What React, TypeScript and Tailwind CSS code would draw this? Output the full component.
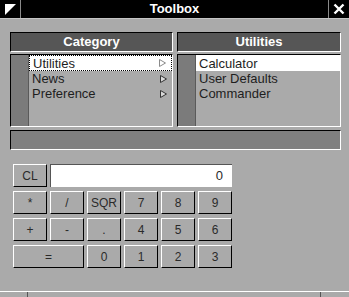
const font = { fontFamily: '"Liberation Sans", Arial, sans-serif' };

function Arrow({ selected }: { selected?: boolean }) {
  return (
    <svg width="7" height="8" viewBox="0 0 7 8" className="shrink-0">
      <path
        d="M0.5 0.5 L6.5 4 L0.5 7.5 Z"
        fill={selected ? "#ffffff" : "#d8d8d8"}
        stroke={selected ? "#8a8a8a" : "#333333"}
        strokeWidth="1"
      />
    </svg>
  );
}

function Panel({
  title,
  items,
  arrows,
  focus,
  width,
}: {
  title: string;
  items: string[];
  arrows?: boolean;
  focus?: boolean;
  width: string;
}) {
  return (
    <div className={`flex flex-col ${width}`}>
      <div className="h-[20px] bg-[#565656] border-t border-l border-black border-b border-r border-b-white border-r-white flex items-center justify-center text-white font-bold text-[13px]">
        {title}
      </div>
      <div className="mt-[2px] h-[73px] flex border-t border-l border-black border-b border-r border-b-white border-r-white">
        <div className="w-[18px] bg-[#7b7b7b] border-r border-[#5a5a5a]" />
        <div className="flex-1 flex flex-col text-[13px] text-[#1e1e1e] leading-[15px]">
          {items.map((it, i) => (
            <div
              key={it}
              className={`h-[15px] flex items-center justify-between pl-[3px] pr-[5px] ${
                i === 0 ? "bg-white" : ""
              } ${i === 0 && focus ? "border border-dotted border-black pl-[2px] pr-[4px]" : ""} ${
                i === 0 ? "h-[16px]" : ""
              }`}
            >
              <span>{it}</span>
              {arrows && <Arrow selected={i === 0} />}
            </div>
          ))}
        </div>
      </div>
    </div>
  );
}

function Btn({ label, wide }: { label: string; wide?: boolean }) {
  return (
    <div
      className={`h-[23px] ${
        wide ? "col-span-2" : ""
      } flex items-center justify-center border-t border-l border-white border-b border-r border-b-black border-r-black text-[12px] text-[#2a2a2a]`}
    >
      {label}
    </div>
  );
}

export default function App() {
  const rows = [
    ["*", "/", "SQR", "7", "8", "9"],
    ["+", "-", ".", "4", "5", "6"],
  ];
  return (
    <div className="w-[349px] h-[297px] bg-[#aaaaaa] flex flex-col overflow-hidden" style={font}>
      <div className="h-[18px] bg-black flex items-stretch">
        <div className="w-[21px] border-r border-[#8a8a8a] flex items-start pl-[5px] pt-[4px]">
          <svg width="11" height="11" viewBox="0 0 11 11">
            <path d="M0 0 H11 L0 11 Z" fill="#ffffff" />
          </svg>
        </div>
        <div className="flex-1 flex items-center justify-center text-white font-bold text-[13px]">Toolbox</div>
        <div className="w-[21px] border-l border-[#8a8a8a] flex items-center justify-center">
          <svg width="12" height="12" viewBox="0 0 12 12">
            <path d="M1.5 1.5 L10.5 10.5 M10.5 1.5 L1.5 10.5" stroke="#ffffff" strokeWidth="2.4" />
          </svg>
        </div>
      </div>
      <div className="h-[1px] bg-[#c4c4c4]" />
      <div className="flex-1 flex flex-col pl-[10px] pr-[8px] pt-[13px]">
        <div className="flex gap-[4px]">
          <Panel
            title="Category"
            items={["Utilities", "News", "Preference"]}
            arrows
            focus
            width="w-[163px]"
          />
          <Panel title="Utilities" items={["Calculator", "User Defaults", "Commander"]} width="w-[164px]" />
        </div>
        <div className="mt-[3px] h-[20px] bg-[#808080] border-t border-l border-black border-b border-r border-b-white border-r-white" />
        <div className="mt-[14px] ml-[3px] grid grid-cols-[repeat(6,34px)] gap-x-[3px] gap-y-[4px]">
          <Btn label="CL" />
          <div className="col-span-5 h-[23px] bg-white border-t border-l border-[#555555] flex items-center justify-end pr-[9px] text-[13px] text-[#2a2a2a]">
            0
          </div>
          {rows.flat().map((l, i) => (
            <Btn key={i} label={l} />
          ))}
          <Btn label="=" wide />
          {["0", "1", "2", "3"].map((l) => (
            <Btn key={l} label={l} />
          ))}
        </div>
      </div>
      <div className="h-[6px] border-t border-white flex">
        <div className="w-[28px] border-r border-[#555555]" />
        <div className="w-[293px] border-r border-[#555555]" />
      </div>
    </div>
  );
}
